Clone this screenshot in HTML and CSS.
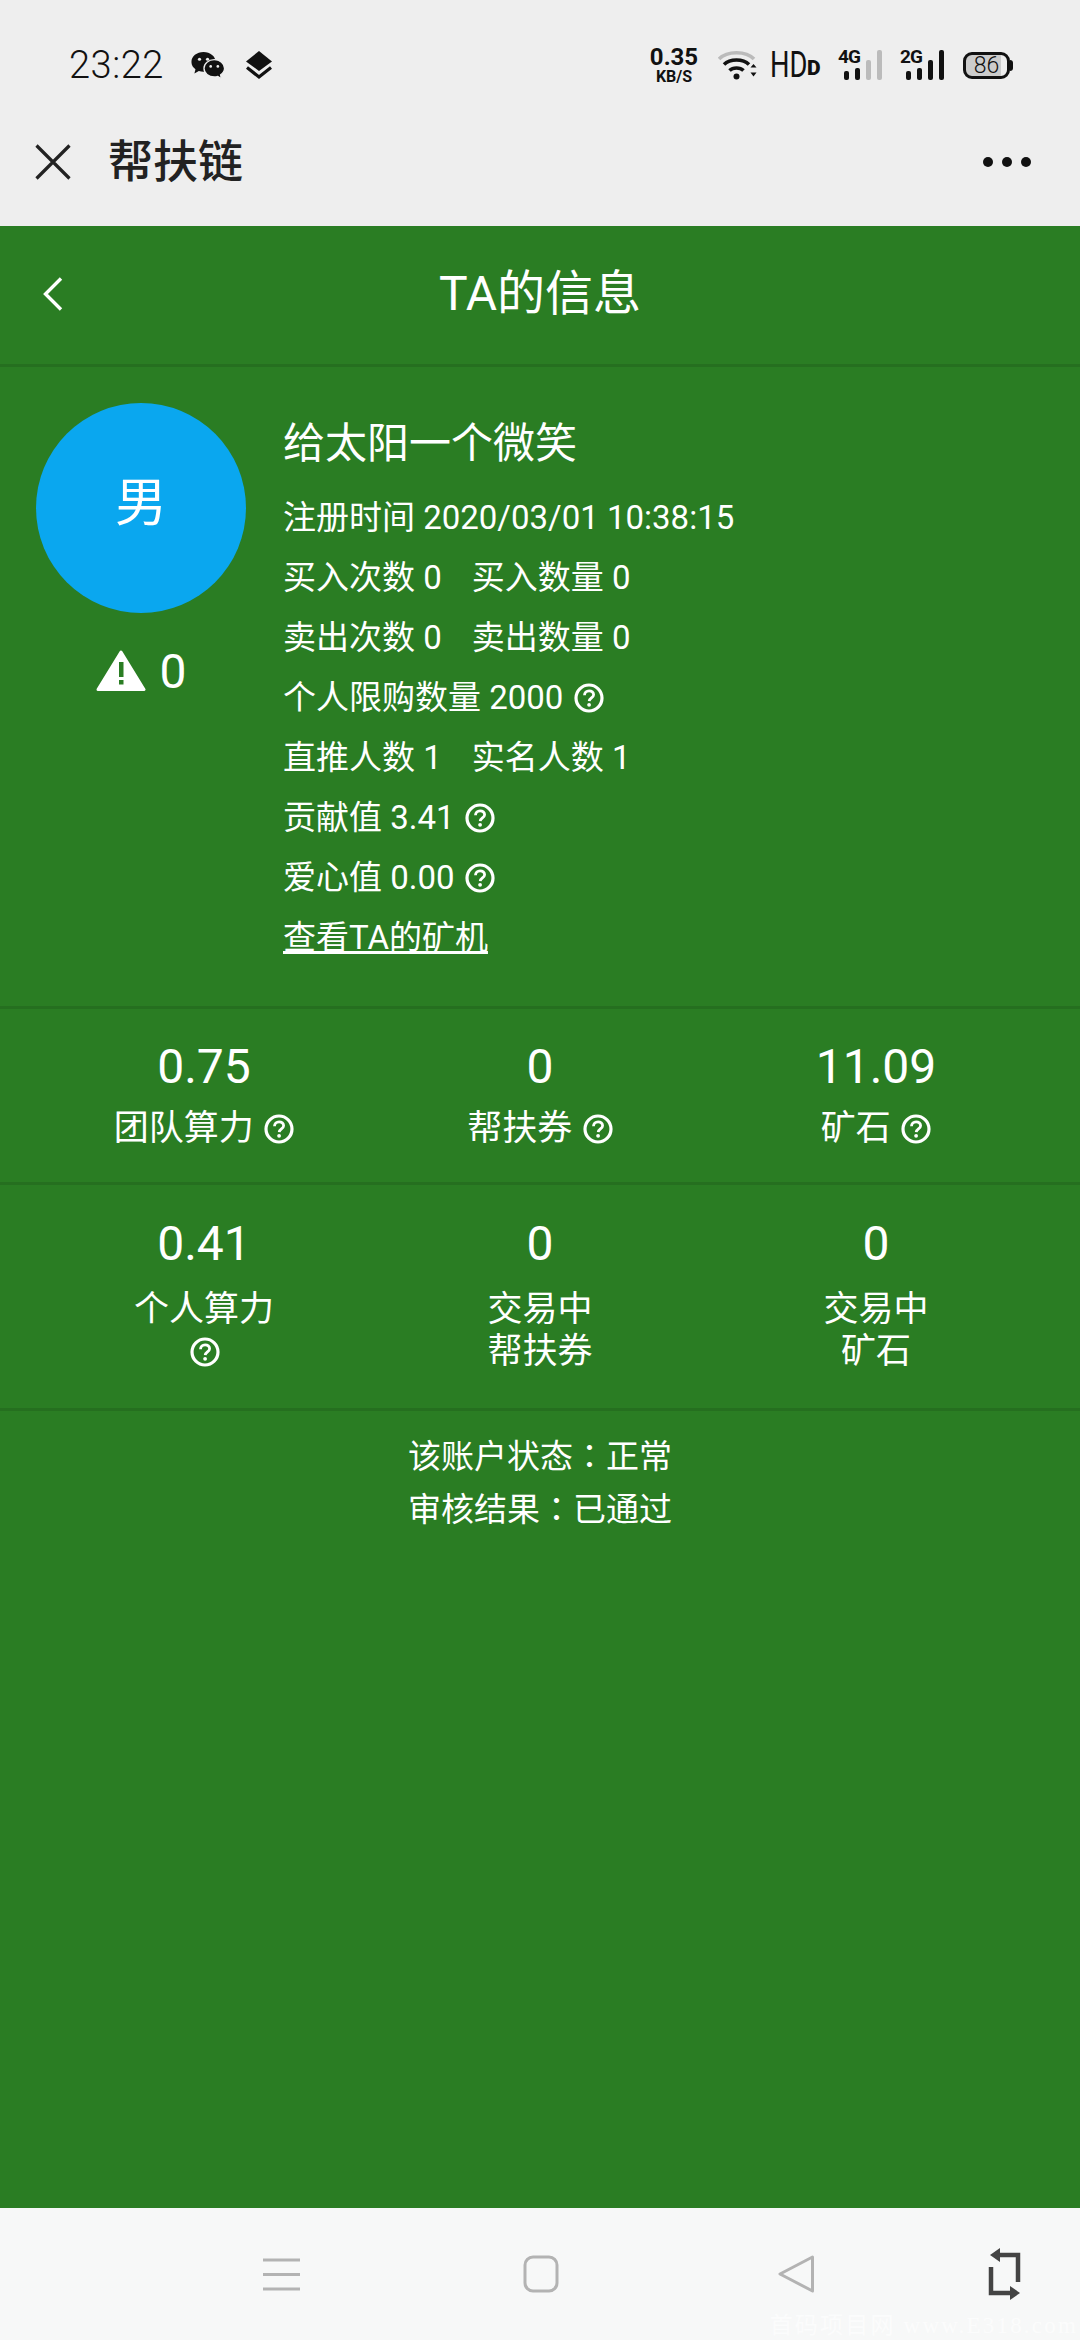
FILE: index.html
```html
<!DOCTYPE html>
<html lang="zh-CN">
<head>
  <meta charset="UTF-8" />
  <title>TA的信息</title>
  <meta name="viewport" content="width=device-width, initial-scale=1" />
  <link rel="stylesheet" href="styles.css">
</head>
<body>
  <svg class="sprites" width="0" height="0">
    <symbol id="help" viewBox="0 0 30 30">
      <circle cx="15" cy="15" r="13" fill="none" stroke="currentColor" stroke-width="3.200"/>
      <path d="M10.500 12.200c0-2.600 2-4.400 4.600-4.400s4.500 1.600 4.500 3.900c0 3.100-4.200 3.300-4.400 6.400" fill="none" stroke="currentColor" stroke-width="2.800"/>
      <circle cx="15.100" cy="21.800" r="1.900" fill="currentColor"/>
    </symbol>
  </svg>

  <div class="page">
    <div class="chrome">
      <div class="status-bar">
        <div class="status-left">
          <span class="status-time">23:22</span>
          <svg class="icon-wechat" width="34" height="29" viewBox="0 0 38 32">
            <path d="M14 1C6.500 1 .5 5.800.5 12c0 3.400 1.800 6.200 4.500 8.200L3.800 25l5-2.800c1.600.5 3.300.8 5.200.8 7.500 0 13.500-5 13.500-11S21.500 1 14 1z" fill="#111"/>
            <ellipse cx="9.500" cy="9" rx="1.800" ry="1.800" fill="#eee"/>
            <ellipse cx="18.500" cy="9" rx="1.800" ry="1.800" fill="#eee"/>
            <path d="M26 9.500c-6.400 0-11.500 4.300-11.500 9.700S19.600 28.900 26 28.900c1.400 0 2.800-.2 4-.6l4 2.500-.9-4.300c2.800-1.800 4.400-4.400 4.400-7.300 0-5.400-5.100-9.700-11.500-9.700z" fill="#111" stroke="#eee" stroke-width="1.500"/>
            <circle cx="22" cy="17" r="1.500" fill="#eee"/>
            <circle cx="30" cy="17" r="1.500" fill="#eee"/>
          </svg>
          <svg class="icon-layers" width="28" height="30" viewBox="0 0 28 30">
            <path d="M14 1 27 11.500 14 21 1 11.500z" fill="#111"/>
            <path d="M2 17.500 14 27 26 17.500" fill="none" stroke="#111" stroke-width="3.200"/>
          </svg>
        </div>
        <div class="status-right">
          <div class="net-speed"><span>0.35</span><span class="net-unit">KB/S</span></div>
          <svg class="icon-wifi" width="40" height="30" viewBox="0 0 40 30">
            <path d="M1 9C9 .5 28 .5 36 9" fill="none" stroke="#bbb" stroke-width="3.500"/>
            <path d="M6 14.500c6-6 19-6 25 0" fill="none" stroke="#111" stroke-width="3.500"/>
            <path d="M11.500 20.500c3.500-3.500 10.500-3.500 14 0" fill="none" stroke="#111" stroke-width="3.500"/>
            <circle cx="18.500" cy="26.500" r="3" fill="#111"/>
            <path d="M32.500 17.500 35.500 14l3 3.500zM32.500 22.500h6l-3 4z" fill="#111"/>
          </svg>
          <div class="hd"><span class="hd-main">HD</span><span class="hd-small">D</span></div>
          <div class="signal">
            <span class="signal-label">4G</span>
            <span class="bar bar-1"></span><span class="bar bar-2"></span><span class="bar bar-3 bar-off"></span><span class="bar bar-4 bar-off"></span>
          </div>
          <div class="signal">
            <span class="signal-label">2G</span>
            <span class="bar bar-1"></span><span class="bar bar-2"></span><span class="bar bar-3"></span><span class="bar bar-4"></span>
          </div>
          <div class="battery"><span class="battery-level">86</span><span class="battery-tip"></span></div>
        </div>
      </div>
      <div class="app-bar">
        <svg class="icon-close" width="36" height="36" viewBox="0 0 36 36">
          <path d="M1.500 1.500 34.500 34.500M34.500 1.500 1.500 34.500" fill="none" stroke="#222" stroke-width="3.200"/>
        </svg>
        <span class="app-title">帮扶链</span>
        <div class="app-more"><i></i><i></i><i></i></div>
      </div>
    </div>

    <div class="main">
      <div class="page-header">
        <svg class="icon-back" width="20" height="34" viewBox="0 0 20 34">
          <path d="M18 1.500 2.500 17 18 32.500" fill="none" stroke="#fff" stroke-width="3.400"/>
        </svg>
        <h1>TA的信息</h1>
      </div>

      <div class="profile">
        <div class="profile-left">
          <div class="avatar"><span class="avatar-text">男</span></div>
          <div class="warn-count">
            <svg width="50" height="42" viewBox="0 0 50 42">
              <path d="M25 2 48 39.500H2z" fill="#fff" stroke="#fff" stroke-width="3" stroke-linejoin="round"/>
              <rect x="23" y="12" width="4.500" height="15" fill="#2a7d23"/>
              <rect x="23" y="30" width="4.500" height="4.500" fill="#2a7d23"/>
            </svg>
            <span>0</span>
          </div>
        </div>
        <div class="profile-info">
          <div class="profile-name">给太阳一个微笑</div>
          <div class="info-row">注册时间 2020/03/01 10:38:15</div>
          <div class="info-row"><span class="info-pair">买入次数 0</span><span>买入数量 0</span></div>
          <div class="info-row"><span class="info-pair">卖出次数 0</span><span>卖出数量 0</span></div>
          <div class="info-row">个人限购数量 2000 <svg class="help"><use href="#help"/></svg></div>
          <div class="info-row"><span class="info-pair">直推人数 1</span><span>实名人数 1</span></div>
          <div class="info-row">贡献值 3.41 <svg class="help"><use href="#help"/></svg></div>
          <div class="info-row">爱心值 0.00 <svg class="help"><use href="#help"/></svg></div>
          <div class="info-row"><a class="info-link" href="#">查看TA的矿机</a></div>
        </div>
      </div>

      <div class="stats stats-first">
        <div class="stat">
          <div class="stat-value">0.75</div>
          <div class="stat-label">团队算力 <svg class="help"><use href="#help"/></svg></div>
        </div>
        <div class="stat">
          <div class="stat-value">0</div>
          <div class="stat-label">帮扶券 <svg class="help"><use href="#help"/></svg></div>
        </div>
        <div class="stat">
          <div class="stat-value">11.09</div>
          <div class="stat-label">矿石 <svg class="help"><use href="#help"/></svg></div>
        </div>
      </div>

      <div class="stats stats-second">
        <div class="stat">
          <div class="stat-value">0.41</div>
          <div class="stat-label">个人算力<br><svg class="help"><use href="#help"/></svg></div>
        </div>
        <div class="stat">
          <div class="stat-value">0</div>
          <div class="stat-label">交易中<br>帮扶券</div>
        </div>
        <div class="stat">
          <div class="stat-value">0</div>
          <div class="stat-label">交易中<br>矿石</div>
        </div>
      </div>

      <div class="account-state">
        <div>该账户状态<span class="colon" lang="zh-TW">：</span>正常</div>
        <div>审核结果<span class="colon" lang="zh-TW">：</span>已通过</div>
      </div>
    </div>

    <div class="nav-bar">
      <svg class="nav-menu" width="38" height="33" viewBox="0 0 38 33">
        <path d="M0 2h37M0 16.500h37M0 31h37" fill="none" stroke="#b3b3b3" stroke-width="3"/>
      </svg>
      <svg class="nav-home" width="36" height="38" viewBox="0 0 36 38">
        <rect x="2" y="2" width="32" height="34" rx="8" fill="none" stroke="#b3b3b3" stroke-width="3"/>
      </svg>
      <svg class="nav-back" width="38" height="40" viewBox="0 0 38 40">
        <path d="M35.500 3 3 20l32.500 17z" fill="none" stroke="#b3b3b3" stroke-width="3" stroke-linejoin="round"/>
      </svg>
      <svg class="nav-rotate" width="34" height="52" viewBox="0 0 34 52">
        <path d="M11 7h19v27" fill="none" stroke="#444" stroke-width="4.500"/>
        <path d="M12 0 2 7l10 7z" fill="#444"/>
        <path d="M3 19v26h19" fill="none" stroke="#444" stroke-width="4.500"/>
        <path d="M22 38l10 7-10 7z" fill="#444"/>
      </svg>
      <span class="watermark">首码项目网 www.E318.com</span>
    </div>
  </div>
</body>
</html>
```

FILE: styles.css
```css
:root {
  --green: #2a7d23;
  --green-line: #256f1f;
  --chrome: #eeeeee;
  --ink: #111111;
}

* {
  box-sizing: border-box;
}

body {
  margin: 0;
  font-family: Roboto, "Noto Sans CJK SC", sans-serif;
  color: #fff;
  background: var(--green);
}

.sprites {
  position: absolute;
}

.page {
  display: flex;
  flex-direction: column;
  height: 100vh;
}

/* Phone status bar + webview title */
.chrome {
  height: 226px;
  background: var(--chrome);
  color: var(--ink);
}

.status-bar {
  height: 130px;
  display: flex;
  align-items: center;
  justify-content: space-between;
  padding: 0 70px 0 69px;
}

.status-left,
.status-right {
  display: flex;
  align-items: center;
}

.status-time {
  width: 122px;
  font-size: 38px;
  font-weight: 300;
  letter-spacing: 0.5px;
}

.icon-layers {
  margin-left: 20px;
}

.net-speed {
  width: 50px;
  display: flex;
  flex-direction: column;
  align-items: center;
  gap: 4px;
  font-size: 24px;
  line-height: 18px;
  font-weight: 700;
}

.net-unit {
  font-size: 16px;
  line-height: 13px;
}

.icon-wifi {
  margin-left: 19px;
}

.hd {
  width: 50px;
  margin-left: 12px;
  display: flex;
  align-items: flex-end;
  line-height: 26px;
}

.hd-main {
  width: 37px;
  font-size: 36px;
  transform: scaleX(0.76);
  transform-origin: left bottom;
}

.hd-small {
  font-size: 21px;
  line-height: 20px;
  font-weight: 900;
}

.signal {
  position: relative;
  width: 44px;
  height: 30px;
  margin-left: 18px;
  display: flex;
  align-items: flex-end;
  justify-content: flex-end;
  gap: 6px;
}

.signal-label {
  position: absolute;
  left: 0;
  top: -1px;
  font-size: 19px;
  line-height: 16px;
  font-weight: 700;
  letter-spacing: -1px;
}

.bar {
  width: 5px;
  background: var(--ink);
  border-radius: 2px;
}

.bar-1 { height: 9px; }
.bar-2 { height: 12px; }
.bar-3 { height: 20px; }
.bar-4 { height: 30px; }

.bar-off {
  background: #bbbbbb;
}

.battery {
  position: relative;
  width: 47px;
  height: 27px;
  margin-left: 19px;
  border: 3px solid var(--ink);
  border-radius: 9px;
  background: linear-gradient(to right, #cccccc 86%, transparent 86%);
  display: flex;
  align-items: center;
  justify-content: center;
}

.battery-level {
  font-size: 23px;
  line-height: 21px;
  font-weight: 300;
}

.battery-tip {
  position: absolute;
  right: -6px;
  top: 5px;
  width: 3px;
  height: 11px;
  background: var(--ink);
  border-radius: 0 3px 3px 0;
}

.app-bar {
  height: 64px;
  display: flex;
  align-items: center;
  padding: 0 49px 0 35px;
}

.app-title {
  margin: 2px 0 0 37px;
  font-size: 45px;
  line-height: 64px;
  font-weight: 500;
  color: #222;
}

.app-more {
  margin-left: auto;
  display: flex;
  gap: 9px;
}

.app-more i {
  width: 10px;
  height: 10px;
  border-radius: 50%;
  background: var(--ink);
}

/* Green page */
.main {
  flex: 1;
  background: var(--green);
}

.page-header {
  position: relative;
  height: 141px;
  border-bottom: 3px solid var(--green-line);
  display: flex;
  align-items: center;
  justify-content: center;
}

.page-header h1 {
  margin: 0 0 3px;
  font-size: 48px;
  line-height: 60px;
  font-weight: 400;
}

.icon-back {
  position: absolute;
  left: 43px;
  top: 51px;
}

.profile {
  display: flex;
  gap: 37px;
  padding: 36px 36px 38px;
  border-bottom: 3px solid var(--green-line);
}

.avatar {
  width: 210px;
  height: 210px;
  border-radius: 50%;
  background: #0aa7ef;
  display: flex;
  align-items: center;
  justify-content: center;
  font-size: 52px;
}

.avatar-text {
  line-height: 60px;
  margin-bottom: 8px;
}

.warn-count {
  margin-top: 28px;
  height: 60px;
  display: flex;
  align-items: center;
  justify-content: center;
  gap: 14px;
  font-size: 48px;
}

.profile-name {
  margin: 11px 0 14px;
  font-size: 42px;
  line-height: 60px;
}

.info-row {
  font-size: 33px;
  line-height: 60px;
}

.info-pair {
  margin-right: 30px;
}

.info-link {
  color: #fff;
  text-decoration: underline;
}

.help {
  width: 30px;
  height: 30px;
  margin-left: 2px;
  vertical-align: -4px;
}

.stats {
  display: grid;
  grid-template-columns: repeat(3, 1fr);
  padding: 28px 36px 32px;
  border-bottom: 3px solid var(--green-line);
  text-align: center;
}

.stats-second {
  padding: 29px 36px 35px;
}

.stat-value {
  font-size: 48px;
  line-height: 60px;
}

.stat-label {
  margin-top: 11px;
  font-size: 35px;
  line-height: 42px;
}

.stats-second .stat-label {
  margin-top: 15px;
}

/* TC glyphs center the fullwidth colon */
.colon {
  font-family: "Noto Sans CJK TC", sans-serif;
}

.account-state {
  padding-top: 18px;
  text-align: center;
  font-size: 33px;
  line-height: 50px;
}

/* Bottom navigation */
.nav-bar {
  position: relative;
  height: 132px;
  background: #f7f8f8;
  display: flex;
  align-items: center;
  padding-left: 263px;
}

.nav-home {
  margin-left: 222px;
}

.nav-back {
  margin-left: 218px;
}

.nav-rotate {
  margin-left: 173px;
}

.watermark {
  position: absolute;
  right: 2px;
  bottom: 0;
  font-family: "Liberation Serif", "Noto Sans CJK SC", serif;
  font-size: 23px;
  line-height: 28px;
  letter-spacing: 2.2px;
  white-space: nowrap;
  color: rgba(255, 255, 255, 0.6);
}
```
